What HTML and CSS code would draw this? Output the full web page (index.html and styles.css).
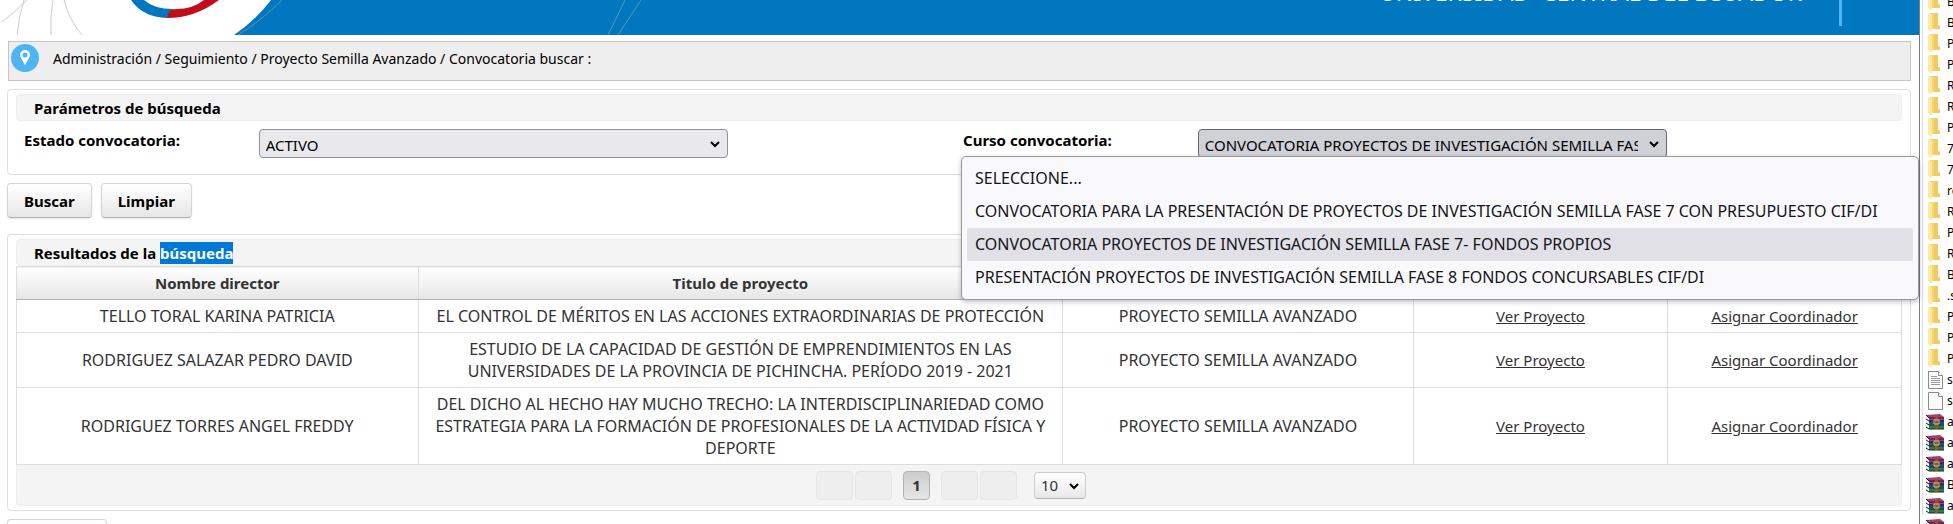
FILE: index.html
```
<!DOCTYPE html>
<html lang="es">
<head>
  <meta charset="UTF-8">
  <title>Convocatoria buscar</title>
  <link rel="stylesheet" href="styles.css">
</head>
<body>
<svg class="defs" width="0" height="0">
  <symbol id="folder" viewBox="0 0 13 19">
    <path d="M2 0h8v12l2 1v3H2z" fill="#f7d773"/>
    <path d="M6 0h4v12l2 1v3H6z" fill="#f0cb62"/>
    <path d="M0 0l4 2v15l-1 2-3-3z" fill="#ffe9a2"/>
  </symbol>
  <symbol id="doc" viewBox="0 0 15 18">
    <path d="M.5.5h10l4 4v13H.5z" fill="#fafafa" stroke="#8a8a8a"/>
    <path d="M10.5.5v4h4" fill="#fff" stroke="#8a8a8a"/>
  </symbol>
  <symbol id="rar" viewBox="0 0 20 16">
    <path d="M1 1l14-1 4 3v3H4L1 5z" fill="#a93a78"/>
    <path d="M1 5l3 1h15v4H4L1 9z" fill="#2d3fa5"/>
    <path d="M1 9l3 1h15v5H4l-3-2z" fill="#23824a"/>
    <path d="M1 1l3 3v11l-3-2z" fill="#eee"/>
    <path d="M1 1l3 3h15M1 5l3 2h15M1 9l3 2h15M1 13l3 2h15" fill="none" stroke="#222"/>
    <path d="M10 1l3 2v12h-3z" fill="#8a5a2c"/>
    <path d="M9 6h5v4H9z" fill="none" stroke="#e0c060"/>
  </symbol>
</svg>

<main class="page">
  <header class="banner">
    <svg class="banner-art" width="700" height="35" viewBox="0 0 700 35">
      <path d="M0 0H271Q255 21 234 35H0z" fill="#fff"/>
      <g fill="none" stroke="#ccc">
        <path d="M2 22Q15 12 27 0M24 0Q19 16 17 35M53 0Q50 16 51 35M64 0Q70 22 82 35"/>
      </g>
      <g fill="none" stroke="#5f93b5">
        <path d="M238 35Q262 20 282 0M625 0L608 35M641 0L618 35"/>
      </g>
      <path d="M131 0Q143 18 170 18L173 9Q154 9 144 0z" fill="#0077be"/>
      <path d="M167 18Q168 9 176 9Q193 9 204 0H219Q195 18 167 18z" fill="#c20e1a"/>
    </svg>
    <div class="banner-title">UNIVERSIDAD&nbsp; CENTRAL DEL ECUADOR</div>
  </header>

  <nav class="breadcrumb">
    <svg width="28" height="28" viewBox="0 0 28 28">
      <circle cx="14" cy="14" r="14" fill="#4db5f2"/>
      <path d="M14 6a5 5 0 0 0-5 5c0 3 3 5 4 9q1 1 2 0c1-4 4-6 4-9a5 5 0 0 0-5-5z" fill="#fff"/>
      <circle cx="14" cy="11" r="2.5" fill="#4db5f2"/>
    </svg>
    <span>Administración / Seguimiento / Proyecto Semilla Avanzado / Convocatoria buscar :</span>
  </nav>

  <section class="panel search">
    <h2 class="panel-title">Parámetros de búsqueda</h2>
    <div class="fields">
      <label for="estado">Estado convocatoria:</label>
      <div class="field">
        <div class="select">
          <select id="estado"><option>ACTIVO</option></select>
          <svg width="12" height="8" viewBox="0 0 12 8"><path d="M2 2l4 4 4-4"/></svg>
        </div>
      </div>
      <label for="curso">Curso convocatoria:</label>
      <div class="field">
        <div class="select open">
          <select id="curso"><option>CONVOCATORIA PROYECTOS DE INVESTIGACIÓN SEMILLA FASE 7- FONDOS PROPIOS</option></select>
          <svg width="12" height="8" viewBox="0 0 12 8"><path d="M2 2l4 4 4-4"/></svg>
        </div>
      </div>
    </div>
    <ul class="options" role="listbox" aria-label="Curso convocatoria">
      <li role="option">SELECCIONE...</li>
      <li role="option">CONVOCATORIA PARA LA PRESENTACIÓN DE PROYECTOS DE INVESTIGACIÓN SEMILLA FASE 7 CON PRESUPUESTO CIF/DI</li>
      <li role="option" class="current" aria-selected="true">CONVOCATORIA PROYECTOS DE INVESTIGACIÓN SEMILLA FASE 7- FONDOS PROPIOS</li>
      <li role="option">PRESENTACIÓN PROYECTOS DE INVESTIGACIÓN SEMILLA FASE 8 FONDOS CONCURSABLES CIF/DI</li>
    </ul>
  </section>

  <div class="buttons">
    <button type="button">Buscar</button>
    <button type="button">Limpiar</button>
  </div>

  <section class="panel results">
    <h2 class="panel-title">Resultados de la <span class="marked">búsqueda</span></h2>
    <table>
      <colgroup>
        <col class="c-director"><col class="c-titulo"><col class="c-tipo"><col class="c-ver"><col>
      </colgroup>
      <thead>
        <tr><th>Nombre director</th><th>Titulo de proyecto</th><th></th><th></th><th></th></tr>
      </thead>
      <tbody>
        <tr>
          <td>TELLO TORAL KARINA PATRICIA</td>
          <td>EL CONTROL DE MÉRITOS EN LAS ACCIONES EXTRAORDINARIAS DE PROTECCIÓN</td>
          <td>PROYECTO SEMILLA AVANZADO</td>
          <td><a href="#">Ver Proyecto</a></td>
          <td><a href="#">Asignar Coordinador</a></td>
        </tr>
        <tr>
          <td>RODRIGUEZ SALAZAR PEDRO DAVID</td>
          <td>ESTUDIO DE LA CAPACIDAD DE GESTIÓN DE EMPRENDIMIENTOS EN LAS UNIVERSIDADES DE LA PROVINCIA DE PICHINCHA. PERÍODO 2019 - 2021</td>
          <td>PROYECTO SEMILLA AVANZADO</td>
          <td><a href="#">Ver Proyecto</a></td>
          <td><a href="#">Asignar Coordinador</a></td>
        </tr>
        <tr>
          <td>RODRIGUEZ TORRES ANGEL FREDDY</td>
          <td>DEL DICHO AL HECHO HAY MUCHO TRECHO: LA INTERDISCIPLINARIEDAD COMO ESTRATEGIA PARA LA FORMACIÓN DE PROFESIONALES DE LA ACTIVIDAD FÍSICA Y DEPORTE</td>
          <td>PROYECTO SEMILLA AVANZADO</td>
          <td><a href="#">Ver Proyecto</a></td>
          <td><a href="#">Asignar Coordinador</a></td>
        </tr>
      </tbody>
    </table>
    <div class="paginator">
      <div class="pages">
        <button type="button" disabled aria-label="Primera"></button>
        <button type="button" disabled aria-label="Anterior"></button>
      </div>
      <button type="button" class="current">1</button>
      <div class="pages">
        <button type="button" disabled aria-label="Siguiente"></button>
        <button type="button" disabled aria-label="Última"></button>
      </div>
      <div class="select rows">
        <select aria-label="Filas por página"><option>10</option></select>
        <svg width="12" height="8" viewBox="0 0 12 8"><path d="M2 2l4 4 4-4"/></svg>
      </div>
    </div>
  </section>

  <div class="buttons bottom">
    <button type="button" aria-label="Regresar"></button>
  </div>
</main>

<aside class="files">
  <ul>
    <li><svg class="folder"><use href="#folder"/></svg>B</li>
    <li><svg class="folder"><use href="#folder"/></svg>B</li>
    <li><svg class="folder"><use href="#folder"/></svg>P</li>
    <li><svg class="folder"><use href="#folder"/></svg>P</li>
    <li><svg class="folder"><use href="#folder"/></svg>R</li>
    <li><svg class="folder"><use href="#folder"/></svg>R</li>
    <li><svg class="folder"><use href="#folder"/></svg>P</li>
    <li><svg class="folder"><use href="#folder"/></svg>7</li>
    <li><svg class="folder"><use href="#folder"/></svg>7</li>
    <li><svg class="folder"><use href="#folder"/></svg>re</li>
    <li><svg class="folder"><use href="#folder"/></svg>R</li>
    <li><svg class="folder"><use href="#folder"/></svg>P</li>
    <li><svg class="folder"><use href="#folder"/></svg>R</li>
    <li><svg class="folder"><use href="#folder"/></svg>B</li>
    <li><svg class="folder"><use href="#folder"/></svg>.s</li>
    <li><svg class="folder"><use href="#folder"/></svg>P</li>
    <li><svg class="folder"><use href="#folder"/></svg>P</li>
    <li><svg class="folder"><use href="#folder"/></svg>P</li>
    <li><svg class="doc" viewBox="0 0 15 18"><use href="#doc" width="15" height="18"/><path d="M3 5.5h6M3 7.5h9M3 9.5h9M3 11.5h9M3 13.5h9" stroke="#999"/></svg>s</li>
    <li><svg class="doc"><use href="#doc"/></svg>s</li>
    <li><svg class="rar"><use href="#rar"/></svg>a</li>
    <li><svg class="rar"><use href="#rar"/></svg>a</li>
    <li><svg class="rar"><use href="#rar"/></svg>a</li>
    <li><svg class="rar"><use href="#rar"/></svg>B</li>
    <li><svg class="rar"><use href="#rar"/></svg>a</li>
    <li><svg class="rar"><use href="#rar"/></svg></li>
  </ul>
</aside>
</body>
</html>
```
FILE: styles.css
```
* {
  box-sizing: border-box;
  margin: 0;
  padding: 0;
}

body {
  display: flex;
  height: 100vh;
  overflow: hidden;
  background: #fff;
  color: #000;
  font-family: "Noto Sans", "Open Sans", sans-serif;
  font-size: 15px;
  line-height: 22px;
}

ul {
  list-style: none;
}

button, select {
  font: inherit;
  color: inherit;
}

.defs {
  position: absolute;
}

.page {
  flex: 1;
  min-width: 0;
  border-right: 1px solid #777b86;
}

/* banner */
.banner {
  position: relative;
  height: 35px;
  overflow: hidden;
  background: #0077be;
}

.banner-art {
  display: block;
}

.banner-title {
  position: absolute;
  right: 77px;
  bottom: 9px;
  height: 60px;
  padding-right: 37px;
  border-right: 3px solid #4db5f2;
  color: #fff;
  font-size: 23px;
  line-height: 52px;
}

/* breadcrumb */
.breadcrumb {
  display: flex;
  gap: 14px;
  height: 40px;
  margin: 6px 8px 8px;
  padding: 2px;
  border: 1px solid #c9c5c7;
  background: #eee;
  font-size: 14px;
}

.breadcrumb span {
  line-height: 30px;
}

/* panels */
.panel {
  margin: 0 8px 0 7px;
  padding: 4px 8px;
  border: 1px solid #ddd;
  border-radius: 4px;
}

.panel-title {
  height: 27px;
  padding: 2px 17px;
  border: 1px solid #eee;
  border-radius: 4px;
  background: #f4f4f4;
  font-size: 15px;
  line-height: 22px;
}

.search {
  position: relative;
  height: 86px;
}

.fields {
  display: grid;
  grid-template-columns: 1fr 3fr 1fr 3fr;
  padding: 8px 8px 8px 0;
}

.fields label {
  padding-left: 8px;
  font-weight: bold;
  line-height: 22px;
}

.select {
  position: relative;
}

.field .select {
  width: calc(100% * 2 / 3);
  margin-left: 8px;
}

.select select {
  display: block;
  width: 100%;
  height: 29px;
  padding: 2px 28px 0 6px;
  border: 1px solid #8f8f9d;
  border-radius: 4px;
  background: #e9e9ed;
  appearance: none;
  text-overflow: clip;
}

.select svg {
  position: absolute;
  right: 7px;
  top: 11px;
  fill: none;
  stroke: #000;
  stroke-width: 2;
  pointer-events: none;
}

.select.open select {
  border-color: #676774;
  background: #d0d0d7;
}

.options {
  position: absolute;
  z-index: 1;
  top: 66px;
  right: -9px;
  width: 958px;
  padding: 5px;
  border: 1px solid #999;
  border-radius: 5px;
  background: #f9f9fb;
  box-shadow: 0 2px 5px rgba(0, 0, 0, .25);
  color: #15141a;
  font-size: 16px;
  white-space: nowrap;
}

.options li {
  padding: 0 8px;
  border-radius: 2px;
  line-height: 33px;
}

.options .current {
  background: #e0e0e6;
}

/* buttons */
.buttons {
  display: flex;
  gap: 9px;
  margin: 8px 7px 16px;
}

.buttons button {
  height: 35px;
  padding: 2px 16px;
  border: 1px solid #d5d5d5;
  border-bottom-color: #b3b3b3;
  border-radius: 4px;
  background: linear-gradient(#fff, #e6e6e6);
  box-shadow: 0 1px 2px rgba(0, 0, 0, .1);
  font-weight: bold;
}

.buttons.bottom {
  margin: 8px 7px 0;
}

.buttons.bottom button {
  width: 100px;
}

/* results */
.marked {
  display: inline-block;
  background: #0078d7;
  color: #fff;
}

table {
  width: 100%;
  border-collapse: collapse;
  table-layout: fixed;
  color: #333;
}

.c-director {
  width: 21.3%;
}

.c-titulo {
  width: 34.2%;
}

.c-tipo {
  width: 18.6%;
}

.c-ver {
  width: 13.5%;
}

th, td {
  padding: 5px 6px;
  border: 1px solid #ddd;
  text-align: center;
}

th {
  height: 33px;
  border-bottom-color: #b3b3b3;
  background: linear-gradient(#fff, #e6e6e6);
}

td {
  font-size: 16px;
}

td a {
  color: #333;
  font-size: 15px;
}

.paginator {
  display: flex;
  justify-content: center;
  align-items: center;
  gap: 11px;
  height: 41px;
  padding-right: 16px;
  border: 1px solid #eee;
  border-top: 0;
  border-radius: 0 0 4px 4px;
  background: #f4f4f4;
  color: #333;
}

.pages {
  display: flex;
  gap: 2px;
}

.paginator button {
  width: 37px;
  height: 29px;
  border: 1px solid #e5e5e5;
  border-radius: 4px;
  background: #eee;
}

.paginator .current {
  width: 27px;
  border-color: #b3b3b3;
  background: linear-gradient(#ccc, #e6e6e6);
  font-weight: bold;
}

.select.rows {
  width: 52px;
  margin-left: 6px;
}

.rows select {
  height: 27px;
  padding: 0 20px 0 6px;
  border-color: #ccc;
  border-bottom-color: #b3b3b3;
  background: linear-gradient(#fff, #e9e9e9);
}

.rows svg {
  top: 10px;
  right: 6px;
}

/* file list */
.files {
  flex: 0 0 33px;
  padding-left: 2px;
  overflow: hidden;
}

.files ul {
  height: 100%;
  margin-top: -9px;
  border-left: 1px solid #cfe0f5;
  font-size: 12px;
  line-height: 21px;
}

.files li {
  display: flex;
  align-items: center;
  height: 21px;
  white-space: nowrap;
}

.files svg {
  flex: none;
}

.folder {
  width: 13px;
  height: 19px;
  margin: 0 6px 0 5px;
}

.doc {
  width: 15px;
  height: 18px;
  margin: 0 4px 0 5px;
}

.rar {
  width: 20px;
  height: 16px;
  margin: 0 2px;
}
```
